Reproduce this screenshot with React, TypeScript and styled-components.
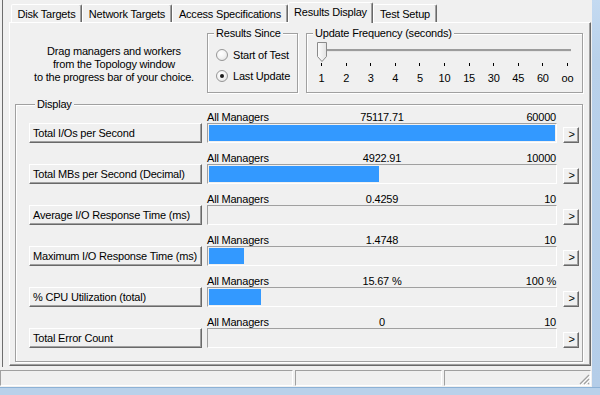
import React from 'react';
import styled, { createGlobalStyle } from 'styled-components';

const Global = createGlobalStyle`
  html, body { margin: 0; padding: 0; background: #f0f0f0; }
  body { font-family: "Liberation Sans", Arial, sans-serif; font-size: 11px; color: #000; letter-spacing: -0.2px; }
  * { box-sizing: border-box; }
`;

const Screen = styled.div`
  width: 600px;
  height: 395px;
  display: flex;
  flex-direction: column;
  overflow: hidden;
  background: #f0f0f0;
`;

const Upper = styled.div`
  display: flex;
  height: 387px;
`;

const Main = styled.div`
  width: 592px;
  display: flex;
  flex-direction: column;
`;

const FrameRight = styled.div`
  flex: 1;
  background: linear-gradient(#c4daf1 0px, #b9d1ea 60px, #b4cde8 100%);
`;

const FrameBottom = styled.div`
  flex: 1;
  background: #b9d1ea;
  border-top: 1px solid #8db2d6;
`;

const Content = styled.div`
  height: 367px;
  margin-left: 2px;
  width: 590px;
  border-left: 1px solid #6d6d6d;
  padding: 2px 0 0 6px;
`;

const TabStrip = styled.div`
  display: flex;
  align-items: flex-end;
  height: 20px;
  padding-left: 2px;
`;

const Tab = styled.div<{ $active?: boolean; $w: number }>`
  width: ${p => p.$w}px;
  height: ${p => (p.$active ? 21 : 18)}px;
  margin-bottom: ${p => (p.$active ? -1 : 0)}px;
  display: flex;
  align-items: center;
  justify-content: center;
  padding-bottom: ${p => (p.$active ? 2 : 0)}px;
  background: #f0f0f0;
  border: 1px solid;
  border-bottom: none;
  border-color: #fff #696969 transparent #fff;
  box-shadow: inset -1px 0 0 #a0a0a0;
  border-top-left-radius: 2px;
  border-top-right-radius: 2px;
  position: relative;
  z-index: ${p => (p.$active ? 2 : 1)};
  white-space: nowrap;
`;

const Panel = styled.div`
  width: 582px;
  height: 344px;
  border: 1px solid;
  border-color: #fff #696969 #696969 #fff;
  box-shadow: inset -1px -1px 0 #a0a0a0;
  padding: 4px 7px 3px 5px;
`;

const TopSection = styled.div`
  display: flex;
  height: 66px;
`;

const Description = styled.div`
  width: 192px;
  padding: 18px 0 0 6px;
  text-align: center;
  line-height: 13px;
`;

const Group = styled.fieldset<{ $w?: number; $h: number }>`
  margin: 0;
  width: ${p => (p.$w ? `${p.$w}px` : 'auto')};
  height: ${p => p.$h}px;
  border: 1px solid #a0a0a0;
  box-shadow: inset 1px 1px 0 #fff, 1px 1px 0 #fff;
  padding: 0;
  min-width: 0;
`;

const Legend = styled.legend`
  margin-left: 6px;
  padding: 0 2px;
  line-height: 13px;
  font-size: 11px;
  background: #f0f0f0;
`;

const RadioList = styled.div`
  display: flex;
  flex-direction: column;
  padding: 4px 0 0 8px;
`;

const RadioRow = styled.label`
  display: flex;
  align-items: center;
  gap: 5px;
  height: 21px;
`;

const RadioCircle = styled.span<{ $checked?: boolean }>`
  width: 12px;
  height: 12px;
  border-radius: 50%;
  border: 1px solid #969696;
  background: radial-gradient(circle at 40% 35%, #ffffff 0%, #f4f4f4 45%, #dcdcdc 100%);
  display: flex;
  align-items: center;
  justify-content: center;
  &::after {
    content: '';
    width: 4px;
    height: 4px;
    border-radius: 50%;
    background: #1b1b1b;
    display: ${p => (p.$checked ? 'block' : 'none')};
  }
`;

const Slider = styled.div`
  position: relative;
  width: 256px;
  height: 20px;
  margin: 2px 0 0 9px;
  padding: 7px 0 0 5px;
`;

const Track = styled.div`
  width: 250px;
  height: 3px;
  background: #9c9c9c;
  border-bottom: 1px solid #e6e6e6;
`;

const Thumb = styled.svg`
  position: absolute;
  left: 1px;
  top: 0;
`;

const TickRow = styled.div`
  display: flex;
  justify-content: space-between;
  width: 247px;
  margin: 1px 0 0 14px;
`;

const TickCol = styled.div`
  width: 1px;
  display: flex;
  flex-direction: column;
  align-items: center;
`;

const Tick = styled.div`
  width: 1px;
  height: 3px;
  background: #000;
`;

const TickLabel = styled.div`
  margin-top: 6px;
  line-height: 13px;
  white-space: nowrap;
`;

const DisplayGroup = styled(Group)`
  margin-top: 5px;
  padding: 0 4px 12px 13px;
`;

const Rows = styled.div`
  display: flex;
  flex-direction: column;
  gap: 9px;
`;

const Row = styled.div`
  display: grid;
  grid-template-columns: 173px 350px 17px;
  grid-template-rows: 12px 20px;
  column-gap: 5px;
`;

const ClassicButton = styled.button`
  font-family: "Liberation Sans", Arial, sans-serif;
  font-size: 11px;
  letter-spacing: -0.2px;
  color: #000;
  background: #f0f0f0;
  border: 1px solid;
  border-color: #fff #696969 #696969 #fff;
  box-shadow: inset -1px -1px 0 #a0a0a0;
  margin: 0;
  padding: 0;
`;

const MetricButton = styled(ClassicButton)`
  grid-column: 1;
  grid-row: 2;
  height: 20px;
  text-align: left;
  padding: 0 0 1px 3px;
  white-space: nowrap;
`;

const MoreButton = styled(ClassicButton)`
  grid-column: 3;
  grid-row: 2;
  justify-self: end;
  align-self: end;
  width: 16px;
  height: 16px;
  line-height: 13px;
  padding: 0 0 1px 1px;
`;

const BarHeader = styled.div`
  grid-column: 2;
  grid-row: 1;
  display: grid;
  grid-template-columns: 1fr auto 1fr;
  line-height: 12px;
  white-space: nowrap;
`;

const HeadLeft = styled.span`
  justify-self: start;
`;

const HeadCenter = styled.span`
  justify-self: center;
`;

const HeadRight = styled.span`
  justify-self: end;
  padding-right: 1px;
`;

const Bar = styled.div`
  grid-column: 2;
  grid-row: 2;
  height: 20px;
  border: 1px solid;
  border-color: #a0a0a0 #fff #fff #a0a0a0;
  padding: 1px;
`;

const Fill = styled.div`
  height: 100%;
  background: #3399ff;
`;

const StatusBar = styled.div`
  display: flex;
  gap: 2px;
  height: 20px;
  padding-top: 3px;
`;

const StatusPanel = styled.div<{ $w: number }>`
  width: ${p => p.$w}px;
  height: 16px;
  border: 1px solid;
  border-color: #a0a0a0 #fff #fff #a0a0a0;
  display: flex;
  justify-content: flex-end;
  align-items: flex-end;
`;

const metrics = [
  { name: 'Total I/Os per Second', value: '75117.71', max: '60000', v: 75117.71, m: 60000 },
  { name: 'Total MBs per Second (Decimal)', value: '4922.91', max: '10000', v: 4922.91, m: 10000 },
  { name: 'Average I/O Response Time (ms)', value: '0.4259', max: '10', v: 0.4259, m: 10 },
  { name: 'Maximum I/O Response Time (ms)', value: '1.4748', max: '10', v: 1.4748, m: 10 },
  { name: '% CPU Utilization (total)', value: '15.67 %', max: '100 %', v: 15.67, m: 100 },
  { name: 'Total Error Count', value: '0', max: '10', v: 0, m: 10 },
];

const ticks = ['1', '2', '3', '4', '5', '10', '15', '30', '45', '60', 'oo'];

const tabs = [
  { label: 'Disk Targets', w: 71 },
  { label: 'Network Targets', w: 90 },
  { label: 'Access Specifications', w: 116 },
  { label: 'Results Display', w: 85, active: true },
  { label: 'Test Setup', w: 64 },
];

export default function App() {
  return (
    <Screen>
      <Global />
      <Upper>
        <Main>
          <Content>
            <TabStrip>
              {tabs.map(t => (
                <Tab key={t.label} $w={t.w} $active={t.active}>
                  {t.label}
                </Tab>
              ))}
            </TabStrip>
            <Panel>
              <TopSection>
                <Description>
                  Drag managers and workers
                  <br />
                  from the Topology window
                  <br />
                  to the progress bar of your choice.
                </Description>
                <Group $w={91} $h={66}>
                  <Legend>Results Since</Legend>
                  <RadioList>
                    <RadioRow>
                      <RadioCircle />
                      Start of Test
                    </RadioRow>
                    <RadioRow>
                      <RadioCircle $checked />
                      Last Update
                    </RadioRow>
                  </RadioList>
                </Group>
                <Group $w={277} $h={66} style={{ marginLeft: 8 }}>
                  <Legend>Update Frequency (seconds)</Legend>
                  <Slider>
                    <Track />
                    <Thumb width="10" height="20" viewBox="0 0 10 20">
                      <defs>
                        <linearGradient id="thumbg" x1="0" y1="0" x2="1" y2="0">
                          <stop offset="0" stopColor="#fdfdfd" />
                          <stop offset="1" stopColor="#e2e2e2" />
                        </linearGradient>
                      </defs>
                      <path d="M0.5 0.5 H9.5 V14.5 L5 19.5 L0.5 14.5 Z" fill="url(#thumbg)" stroke="#8a8a8a" strokeWidth="1" />
                    </Thumb>
                  </Slider>
                  <TickRow>
                    {ticks.map(t => (
                      <TickCol key={t}>
                        <Tick />
                        <TickLabel>{t}</TickLabel>
                      </TickCol>
                    ))}
                  </TickRow>
                </Group>
              </TopSection>
              <DisplayGroup $h={264}>
                <Legend>Display</Legend>
                <Rows>
                  {metrics.map(m => {
                    const pct = Math.min(1, Math.floor(m.v) / m.m) * 100;
                    return (
                      <Row key={m.name}>
                        <BarHeader>
                          <HeadLeft>All Managers</HeadLeft>
                          <HeadCenter>{m.value}</HeadCenter>
                          <HeadRight>{m.max}</HeadRight>
                        </BarHeader>
                        <MetricButton>{m.name}</MetricButton>
                        <Bar>
                          {pct > 0 && <Fill style={{ width: `${pct}%` }} />}
                        </Bar>
                        <MoreButton>&gt;</MoreButton>
                      </Row>
                    );
                  })}
                </Rows>
              </DisplayGroup>
            </Panel>
          </Content>
          <StatusBar>
            <StatusPanel $w={293} />
            <StatusPanel $w={147} />
            <StatusPanel $w={147}>
              <svg width="12" height="12" viewBox="0 0 12 12">
                <path d="M11 2 L2 11 M11 6 L6 11 M11 10 L10 11" stroke="#a0a0a0" strokeWidth="1.2" />
                <path d="M12 3 L3 12 M12 7 L7 12" stroke="#fff" strokeWidth="1" />
              </svg>
            </StatusPanel>
          </StatusBar>
        </Main>
        <FrameRight />
      </Upper>
      <FrameBottom />
    </Screen>
  );
}
